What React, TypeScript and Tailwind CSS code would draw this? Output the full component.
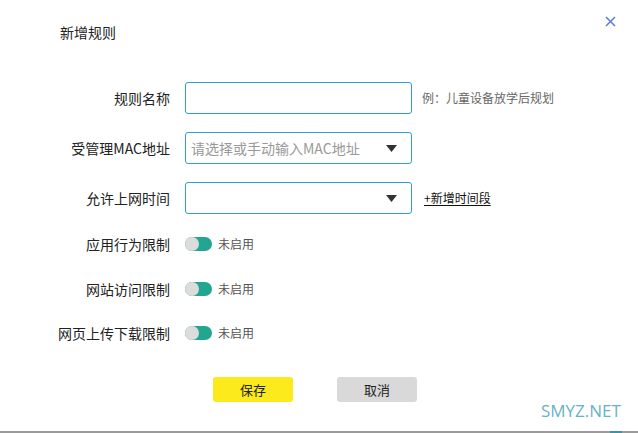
import React from "react";

const font = { fontFamily: '"Microsoft YaHei", "Noto Sans CJK SC", "Noto Sans", sans-serif' };

function Caret() {
  return (
    <svg width="11" height="7" viewBox="0 0 11 7" className="shrink-0">
      <path d="M0 0 L11 0 L5.5 7 Z" fill="#333" />
    </svg>
  );
}

function Toggle() {
  return (
    <div className="flex items-center">
      <div className="relative w-[27px] h-[14px] rounded-full bg-[#22a691]">
        <div className="absolute left-0 top-0 w-[14px] h-[14px] rounded-full bg-[#dcdcdc]" />
      </div>
      <span className="ml-[6px] text-[12px] leading-[14px] text-[#555]">未启用</span>
    </div>
  );
}

function Label({ children }: { children: React.ReactNode }) {
  return (
    <div className="w-[170px] shrink-0 text-right text-[14px] leading-[18px] text-[#222]">
      {children}
    </div>
  );
}

export default function App() {
  return (
    <div className="relative w-[638px] h-[433px] bg-white overflow-hidden" style={font}>
      <div className="flex flex-col h-[431px]">
        <div className="flex items-start justify-between pt-[23px]">
          <div className="ml-[60px] text-[14px] leading-[18px] text-[#222]">新增规则</div>
          <svg width="11" height="11" viewBox="0 0 11 11" className="mr-[22px] mt-[-7px]">
            <path d="M1 1 L10 10 M10 1 L1 10" stroke="#5b7fc4" strokeWidth="1.5" />
          </svg>
        </div>

        <div className="flex flex-col mt-[41px]">
          <div className="flex items-center h-[32px]">
            <Label>规则名称</Label>
            <div className="ml-[15px] w-[227px] h-[32px] border border-[#2d9fd8] rounded-[3px]" />
            <span className="ml-[10px] text-[12px] leading-[16px] text-[#666]">例：儿童设备放学后规划</span>
          </div>

          <div className="flex items-center h-[32px] mt-[18px]">
            <Label>受管理MAC地址</Label>
            <div className="ml-[15px] w-[227px] h-[32px] border border-[#2d9fd8] rounded-[3px] flex items-center justify-between pl-[5px] pr-[14px]">
              <span className="text-[14px] leading-[18px] text-[#999]">请选择或手动输入MAC地址</span>
              <Caret />
            </div>
          </div>

          <div className="flex items-center h-[32px] mt-[18px]">
            <Label>允许上网时间</Label>
            <div className="ml-[15px] w-[227px] h-[32px] border border-[#2d9fd8] rounded-[3px] flex items-center justify-end pr-[14px]">
              <Caret />
            </div>
            <span className="ml-[12px] text-[12px] leading-[16px] text-[#111] underline underline-offset-2">+新增时间段</span>
          </div>

          <div className="flex items-center h-[20px] mt-[20px]">
            <Label>应用行为限制</Label>
            <div className="ml-[15px]"><Toggle /></div>
          </div>
          <div className="flex items-center h-[20px] mt-[25px]">
            <Label>网站访问限制</Label>
            <div className="ml-[15px]"><Toggle /></div>
          </div>
          <div className="flex items-center h-[20px] mt-[24px]">
            <Label>网页上传下载限制</Label>
            <div className="ml-[15px]"><Toggle /></div>
          </div>
        </div>

        <div className="flex mt-[34px] ml-[213px] gap-[44px]">
          <button className="w-[80px] h-[25px] rounded-[3px] bg-[#fcea1c] text-[13px] leading-[25px] text-[#222]">保存</button>
          <button className="w-[80px] h-[25px] rounded-[3px] bg-[#d9d9d9] text-[13px] leading-[25px] text-[#222]">取消</button>
        </div>
      </div>
      <div className="h-[2px] bg-[#9a9a9a] relative">
        <div className="absolute left-[610px] top-0 w-[12px] h-[2px] bg-[#3c93a6]" />
      </div>
      <div className="absolute left-[541px] top-[401px] text-[17px] leading-[20px] text-[#66b3c4]" style={{ fontFamily: '"Open Sans", "Noto Sans", sans-serif' }}>
        SMYZ.NET
      </div>
    </div>
  );
}
